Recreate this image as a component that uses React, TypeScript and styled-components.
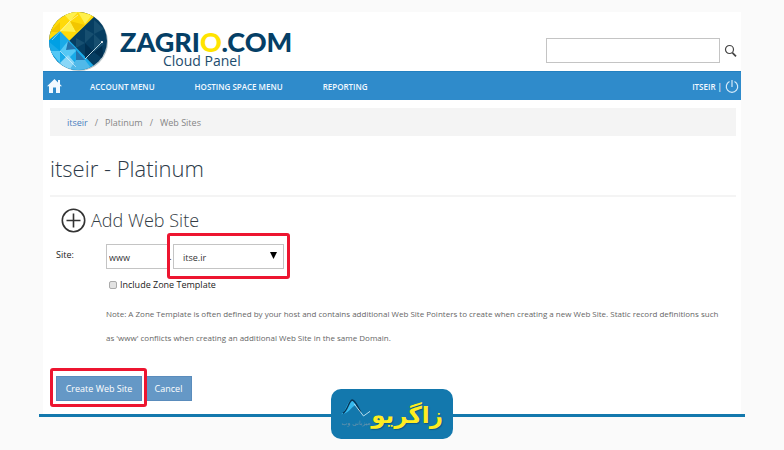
import React from 'react';
import styled, { createGlobalStyle, css } from 'styled-components';

const Global = createGlobalStyle`
  * { box-sizing: border-box; }
  body {
    margin: 0;
    background: #fafafa;
    font-family: "Open Sans", "Noto Sans", sans-serif;
    font-size: 9px;
    color: #222;
  }
  button, input, select { font: inherit; margin: 0; border-radius: 0; }
`;

const Page = styled.div`
  padding: 12px 39px 11px;
`;

const Panel = styled.main`
  margin: 0 4px;
  padding-bottom: 13px;
  background: #fff;
`;

const Header = styled.header`
  display: flex;
  justify-content: space-between;
  height: 59px;
  padding: 0 4px 0 5px;
`;

const Brand = styled.a`
  display: flex;
  gap: 12px;
  color: #053f66;
  text-decoration: none;
`;

const BrandText = styled.span`
  display: flex;
  flex-direction: column;
  padding-top: 18px;
`;

const BrandName = styled.span`
  font: 900 27px/24px Lato, sans-serif;
`;

const BrandO = styled.span`
  color: #ffe400;
`;

const BrandSub = styled.span`
  padding-left: 43px;
  font-size: 14px;
  line-height: 14px;
  color: #1c4c6e;
`;

const Search = styled.form`
  display: flex;
  align-items: center;
  gap: 4px;
  align-self: flex-start;
  margin-top: 26px;
`;

const SearchInput = styled.input`
  width: 174px;
  height: 25px;
  border: 1px solid #c4c4c4;
  background: #fff;
`;

const IconButton = styled.button`
  display: flex;
  padding: 0;
  border: 0;
  background: none;
  color: inherit;
`;

const Nav = styled.nav`
  display: flex;
  align-items: center;
  height: 29px;
  padding: 0 2px 0 4px;
  background: #2f8bcb;
  border-top: 1px solid #2380c0;
  color: #f2f9ff;
  font-size: 8px;
  font-weight: 600;
`;

const NavLink = styled.a`
  display: flex;
  color: inherit;
  text-decoration: none;
`;

const NavMenu = styled.div`
  display: flex;
  flex: 1;
  gap: 40px;
  padding-left: 28px;
`;

const User = styled.div`
  display: flex;
  align-items: center;
  gap: 3px;
`;

const Crumbs = styled.div`
  display: flex;
  align-items: center;
  gap: 7px;
  height: 28px;
  margin: 8px 5px 0 7px;
  padding-left: 17px;
  background: #f4f4f4;
  color: #888;
`;

const CrumbLink = styled.a<{ $active?: boolean }>`
  color: ${(p) => (p.$active ? '#4a7fc0' : '#858585')};
  text-decoration: none;
`;

const Title = styled.h1`
  margin: 0 5px 0 7px;
  padding: 13px 0 8px;
  border-bottom: 2px solid #f4f4f4;
  font-size: 22px;
  line-height: 38px;
  font-weight: 300;
  color: #2c3a48;
`;

const Subtitle = styled.h2`
  display: flex;
  align-items: center;
  gap: 5px;
  margin: 9px 0 0 18px;
  font-size: 18px;
  line-height: 28px;
  font-weight: 300;
  color: #333c44;
`;

const Form = styled.form`
  padding: 10px 13px 0;
`;

const Grid = styled.div`
  display: grid;
  grid-template-columns: 50px 1fr;
`;

const FieldLabel = styled.label`
  line-height: 22px;
`;

const Fields = styled.div`
  display: flex;
  align-items: center;
`;

const field = css`
  height: 25px;
  border: 1px solid #c4c4c4;
  background: #fff;
  color: #333;
`;

const HostInput = styled.input`
  ${field}
  width: 62px;
  padding: 2px 2px 0;
`;

const Dot = styled.span`
  width: 5px;
  text-align: center;
`;

const Marked = styled.span<{ $inset: string }>`
  position: relative;
  display: flex;
  &::after {
    content: "";
    position: absolute;
    inset: ${(p) => p.$inset};
    border: 3px solid #ed1530;
    border-radius: 3px;
    pointer-events: none;
  }
`;

const DomainSelect = styled.select`
  ${field}
  width: 111px;
  padding: 2px 9px 0;
  appearance: none;
`;

const Arrow = styled.svg`
  position: absolute;
  right: 7px;
  top: 8px;
  pointer-events: none;
`;

const CheckLabel = styled.label`
  display: flex;
  align-items: center;
  gap: 3px;
  padding: 8px 0 0 3px;
  line-height: 16px;
`;

const Check = styled.input`
  appearance: none;
  width: 8px;
  height: 8px;
  border: 1px solid #aaa;
  border-radius: 2px;
  background: #e2e2e2;
`;

const Note = styled.p`
  margin: 9px 0 0;
  padding-right: 4px;
  font-size: 8px;
  line-height: 24px;
  color: #666;
`;

const Actions = styled.div`
  display: flex;
  gap: 3px;
  margin-top: 26px;
`;

const Button = styled.button<{ $wide?: boolean }>`
  width: ${(p) => (p.$wide ? 86 : 47)}px;
  height: 25px;
  padding: 0;
  border: 1px solid #5a8cbc;
  background: #6598c6;
  color: #fff;
`;

const Footer = styled.footer`
  position: relative;
  display: flex;
  justify-content: center;
  margin-top: -25px;
  &::before {
    content: "";
    position: absolute;
    inset: 25px 0 auto;
    height: 3px;
    background: #1378ad;
  }
`;

const Badge = styled.div`
  position: relative;
  display: flex;
  justify-content: space-between;
  width: 122px;
  height: 50px;
  padding: 0 10px;
  border-radius: 10px;
  background: #1378ad;
`;

const BadgeName = styled.span`
  font: 700 23px/52px "DejaVu Sans", sans-serif;
  color: #ffed21;
  text-shadow: 1px 1px 1px #0c5a83;
`;

const BadgeMark = styled.span`
  display: flex;
  flex-direction: column;
  align-items: center;
  width: 30px;
  padding-top: 10px;
  font: 6px/10px "DejaVu Sans", sans-serif;
  color: #6f96ac;
  white-space: nowrap;
`;

const LogoMark = () => (
  <svg width="60" height="60" viewBox="0 0 60 60" aria-hidden="true">
    <defs>
      <clipPath id="disc"><circle cx="30" cy="29" r="29" /></clipPath>
    </defs>
    <circle cx="31" cy="30" r="29" fill="#b9c5ca" />
    <g clipPath="url(#disc)">
      <path d="M0 0H60V60H0Z" fill="#063e62" />
      <path d="M0 0H51L21 29 12 20 0 31Z" fill="#ffda0a" />
      <path d="M0 29L12 19 52 60H0Z" fill="#19aae8" />
      <path d="M14 0L30 0 22 9ZM30 0L44 3 37 12ZM12 19L22 9 28 20Z" fill="#fff04d" />
      <path d="M2 20L12 10 12 20ZM22 9L37 13 28 20Z" fill="#f2c600" />
      <path d="M0 29L12 19 12 39Z" fill="#00a0e4" />
      <path d="M12 39L20 29 28 39 20 47ZM2 39L12 39 12 51Z" fill="#55c8f5" />
      <path d="M20 29L28 37 18 38ZM28 38L37 48 28 48Z" fill="#2474ae" />
      <path d="M12 51L20 43 28 52 20 60Z" fill="#8bd7f7" />
      <path d="M28 48L37 48 46 60H20Z" fill="#51b9e9" />
      <path d="M37 17L46 22 37 31ZM46 8L56 17 46 22ZM46 22L56 32 46 40ZM28 26L37 31 28 36Z" fill="#174f70" />
      <path d="M37 31L46 40 37 47ZM46 40L54 34 56 48Z" fill="#002f50" />
      <path d="M37 47L46 38 54 30" fill="none" stroke="#b2d0dc" />
      <path d="M4 28L22 9 30 3M12 39L28 55" fill="none" stroke="#fff" strokeOpacity=".5" />
      <circle cx="54" cy="30" r="1" fill="#fff" />
    </g>
  </svg>
);

export default function App() {
  return (
    <>
      <Global />
      <Page>
        <Panel>
          <Header>
            <Brand href="#" aria-label="Zagrio.com Cloud Panel">
              <LogoMark />
              <BrandText>
                <BrandName>ZAGRI<BrandO>O</BrandO>.COM</BrandName>
                <BrandSub>Cloud Panel</BrandSub>
              </BrandText>
            </Brand>
            <Search>
              <SearchInput type="search" aria-label="Search" />
              <IconButton type="button" aria-label="Search">
                <svg width="13" height="14" viewBox="0 0 13 14" fill="none" stroke="#444">
                  <circle cx="5.5" cy="5.5" r="4" strokeWidth="1.2" />
                  <path d="M8.5 8.8L12 12.4" strokeWidth="1.8" />
                </svg>
              </IconButton>
            </Search>
          </Header>
          <Nav>
            <NavLink href="#" aria-label="Home">
              <svg width="15" height="14" viewBox="0 0 15 14" fill="#f2f9ff">
                <path d="M7.5 0L11 3.4V1H13V5.3L15 7.3H13V14H9V8.5H6V14H2V7.3H0Z" />
              </svg>
            </NavLink>
            <NavMenu>
              <NavLink href="#">ACCOUNT MENU</NavLink>
              <NavLink href="#">HOSTING SPACE MENU</NavLink>
              <NavLink href="#">REPORTING</NavLink>
            </NavMenu>
            <User>
              <span>ITSEIR |</span>
              <IconButton type="button" aria-label="Sign out">
                <svg width="14" height="15" viewBox="0 0 14 15" fill="none" stroke="#d5ebfa" strokeWidth="1.2">
                  <path d="M4.5 2.5A5.7 5.7 0 1 0 9.5 2.5M7 1V8" />
                </svg>
              </IconButton>
            </User>
          </Nav>
          <Crumbs>
            <CrumbLink href="#" $active>itseir</CrumbLink>
            <span>/</span>
            <CrumbLink href="#">Platinum</CrumbLink>
            <span>/</span>
            <CrumbLink href="#">Web Sites</CrumbLink>
          </Crumbs>
          <Title>itseir - Platinum</Title>
          <Subtitle>
            <svg width="25" height="25" viewBox="0 0 25 25" fill="none" stroke="#333" strokeWidth="1.6">
              <circle cx="12.5" cy="12.5" r="11.2" />
              <path d="M5.5 12.5H19.5M12.5 5.5V19.5" />
            </svg>
            Add Web Site
          </Subtitle>
          <Form>
            <Grid>
              <FieldLabel htmlFor="host">Site:</FieldLabel>
              <div>
                <Fields>
                  <HostInput id="host" defaultValue="www" />
                  <Dot>.</Dot>
                  <Marked $inset="-11px -6px -10px">
                    <DomainSelect aria-label="Domain">
                      <option>itse.ir</option>
                    </DomainSelect>
                    <Arrow width="7" height="7" viewBox="0 0 7 7"><path d="M0 0H7L3.5 7Z" /></Arrow>
                  </Marked>
                </Fields>
                <CheckLabel>
                  <Check type="checkbox" />
                  Include Zone Template
                </CheckLabel>
                <Note>
                  Note: A Zone Template is often defined by your host and contains additional Web Site
                  Pointers to create when creating a new Web Site. Static record definitions such as
                  'www' conflicts when creating an additional Web Site in the same Domain.
                </Note>
              </div>
            </Grid>
            <Actions>
              <Marked $inset="-8px -5px -6px -6px">
                <Button type="button" $wide>Create Web Site</Button>
              </Marked>
              <Button type="button">Cancel</Button>
            </Actions>
          </Form>
        </Panel>
        <Footer>
          <Badge dir="rtl" lang="fa">
            <BadgeName>زاگریو</BadgeName>
            <BadgeMark>
              <svg width="30" height="19" viewBox="0 0 32 20" fill="none">
                <path d="M0 16C5 15 7 0 12 1L16 6C11 8 8 16 0 16Z" fill="#36b9ee" />
                <path d="M2 15C7 13 8 2 12 1C16 2 18 9 21 14" stroke="#07385a" strokeWidth="1.6" />
                <path d="M14 5L24 18L31 13" stroke="#bfe3f1" />
              </svg>
              میزبانی وب
            </BadgeMark>
          </Badge>
        </Footer>
      </Page>
    </>
  );
}
